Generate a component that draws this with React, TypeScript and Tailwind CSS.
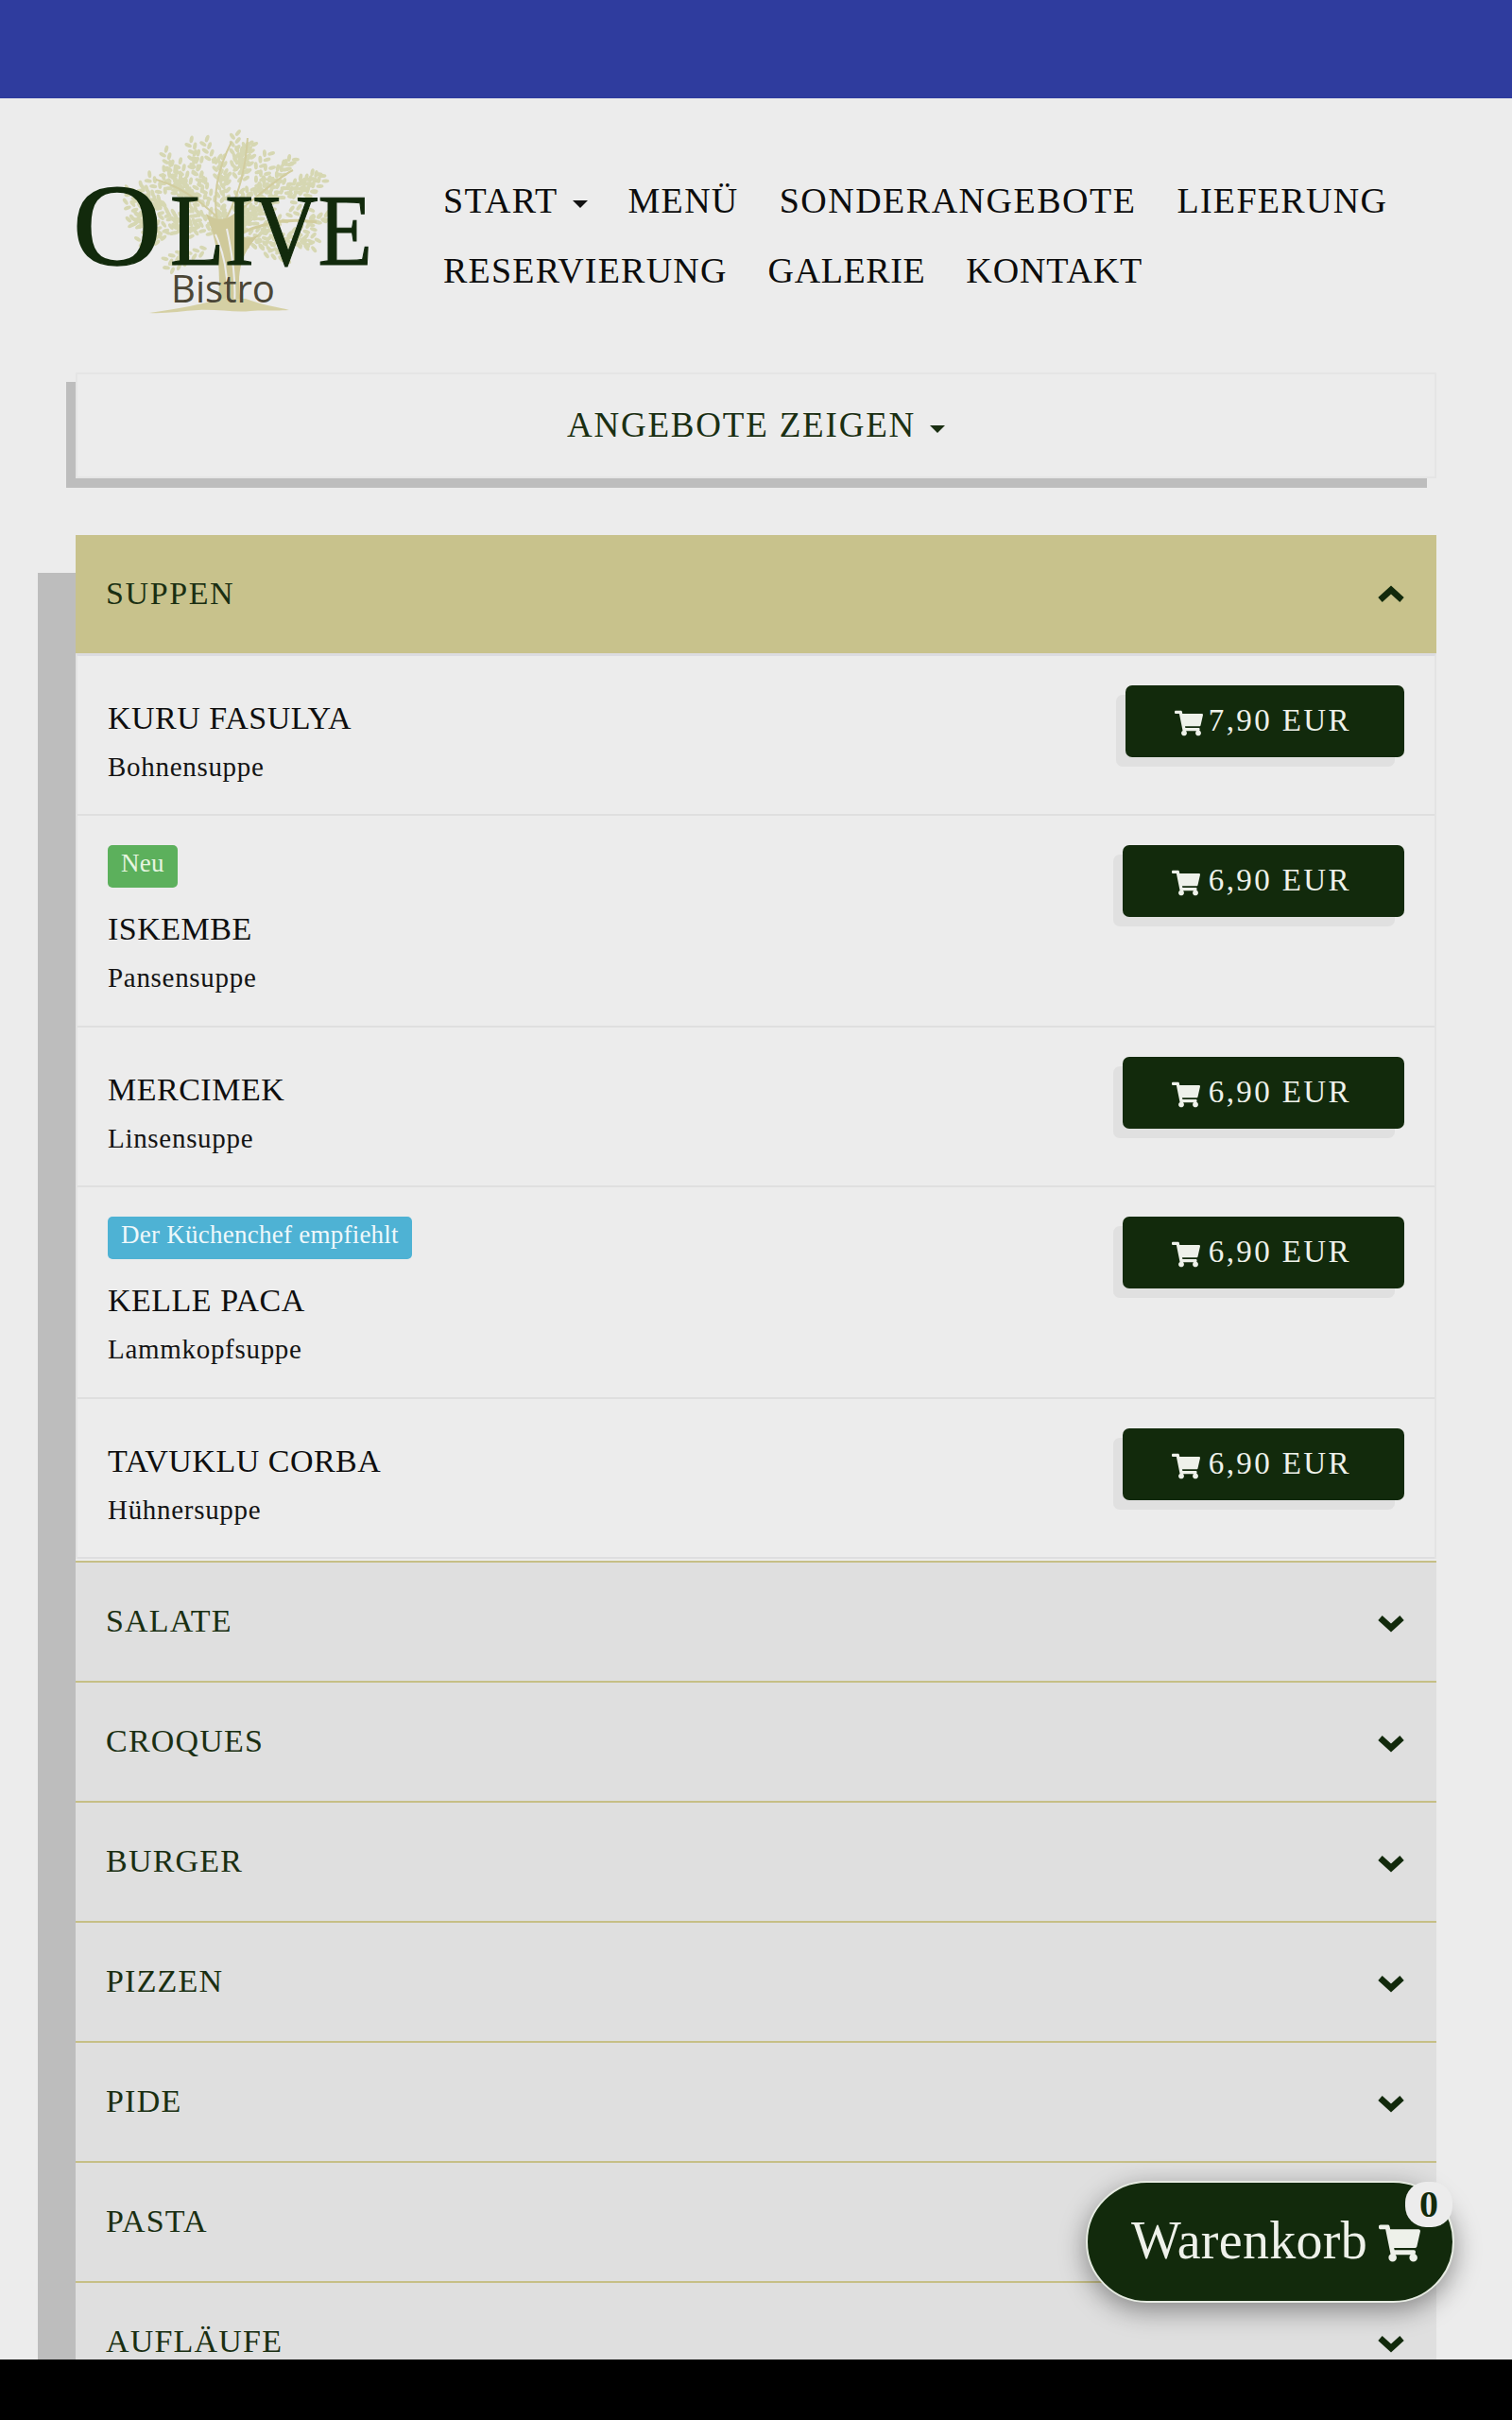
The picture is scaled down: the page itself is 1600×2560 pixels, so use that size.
import React from "react";
import { FaShoppingCart } from "react-icons/fa";

const serif = "font-['Liberation_Serif','Noto_Serif',serif]";

type Item = { title: string; desc: string; price: string; narrow?: boolean; badge?: { text: string; cls: string } };

const items: Item[] = [
  { title: "KURU FASULYA", desc: "Bohnensuppe", price: "7,90 EUR", narrow: true },
  { title: "ISKEMBE", desc: "Pansensuppe", price: "6,90 EUR", badge: { text: "Neu", cls: "bg-[#5cb05c] text-[#e6f5e0]" } },
  { title: "MERCIMEK", desc: "Linsensuppe", price: "6,90 EUR" },
  { title: "KELLE PACA", desc: "Lammkopfsuppe", price: "6,90 EUR", badge: { text: "Der Küchenchef empfiehlt", cls: "bg-[#4eb2d4] text-[#eef8fb]" } },
  { title: "TAVUKLU CORBA", desc: "Hühnersuppe", price: "6,90 EUR" },
];

const categories = ["SALATE", "CROQUES", "BURGER", "PIZZEN", "PIDE", "PASTA", "AUFLÄUFE"];

// Deterministic leaves for the olive tree of the logo
function buildLeaves() {
  let s = 12345;
  const r = () => {
    s = (s * 16807) % 2147483647;
    return s / 2147483647;
  };
  const out: { x: number; y: number; a: number }[] = [];
  for (let i = 0; i < 100; i++) {
    const t = r() * Math.PI * 2;
    const d = Math.sqrt(r());
    const cx = 160 + Math.cos(t) * d * 92;
    let cy = 94 + Math.sin(t) * d * 60;
    if (cy > 135 && Math.abs(cx - 158) < 35) cy -= 30;
    const ang = Math.atan2(cy - 125, cx - 158) + (r() - 0.5) * 0.5;
    for (let j = 0; j < 7; j++) {
      const px = cx + Math.cos(ang) * j * 4;
      const py = cy + Math.sin(ang) * j * 4;
      const side = j % 2 === 0 ? 1 : -1;
      const deg = (ang * 180) / Math.PI + side * 38;
      out.push({ x: px + Math.cos(ang + side * 1.4) * 3, y: py + Math.sin(ang + side * 1.4) * 3, a: deg });
    }
  }
  return out;
}
const leaves = buildLeaves();

function Logo() {
  return (
    <svg width="320" height="206" viewBox="0 0 320 206" className="block shrink-0 mt-[26px] overflow-visible">
      <g fill="#d6d7b2">
        {leaves.map((l, i) => (
          <ellipse key={i} cx={l.x} cy={l.y} rx="4" ry="2" transform={`rotate(${l.a} ${l.x} ${l.y})`} />
        ))}
      </g>
      <g stroke="#d2cd9f" fill="none" strokeWidth="2">
        <path d="M150 105 C145 75 150 50 165 20" />
        <path d="M150 100 C130 80 105 65 85 60" />
        <path d="M158 105 C185 85 210 60 230 50" />
        <path d="M160 100 C175 70 180 45 182 16" />
        <path d="M165 122 C195 105 225 100 255 105" strokeWidth="3" />
      </g>
      <path d="M138 96 C150 105 160 104 176 90 C170 115 172 128 195 118 C176 135 168 160 176 192 L150 192 C155 160 150 125 138 96 Z" fill="#cfc99a" />
      <g stroke="#ececec" strokeWidth="2" fill="none">
        <path d="M148 118 C158 140 162 165 160 192" />
        <path d="M160 112 C165 135 170 165 168 192" />
      </g>
      <path d="M78 201 C110 196 135 192 152 186 L180 186 C195 192 215 195 226 198 C205 199 195 198 185 199 C170 201 150 197 130 198 C112 199 95 202 78 201 Z" fill="#d5d0a4" />
      <text x="-3" y="150" textLength="94" lengthAdjust="spacingAndGlyphs" fontSize="122" fontFamily="'Liberation Serif',serif" fill="#122a0c" stroke="#122a0c" strokeWidth="1.6">O</text>
      <text x="100" y="150" textLength="214" lengthAdjust="spacingAndGlyphs" fontSize="108" fontFamily="'Liberation Serif',serif" fill="#122a0c" stroke="#122a0c" strokeWidth="1.2">LIVE</text>
      <text x="101" y="190" textLength="110" lengthAdjust="spacingAndGlyphs" fontSize="40" fontFamily="'Open Sans',sans-serif" fill="#4b4636">Bistro</text>
    </svg>
  );
}

function Chevron({ up }: { up?: boolean }) {
  return (
    <svg width="30" height="20" viewBox="0 0 30 20" className={`shrink-0 ${up ? "rotate-180" : "mt-[2px]"}`}>
      <path d="M3.5 4.5 L15 15 L26.5 4.5" fill="none" stroke="#122a0c" strokeWidth="6.5" strokeLinejoin="miter" />
    </svg>
  );
}

function Caret({ color }: { color: string }) {
  return <span className={`inline-block w-0 h-0 ml-[15px] align-middle border-x-[8px] border-x-transparent border-t-[8px] ${color}`} />;
}

function NavLink({ children, ls }: { children: React.ReactNode; ls: string }) {
  return <a className={`whitespace-nowrap text-[38px] leading-[74px] text-[#0c0c0c] ${ls}`}>{children}</a>;
}

function Row({ item, last }: { item: Item; last: boolean }) {
  return (
    <div className={`flex justify-between items-start pt-[31px] pl-[32px] pr-[32px] border-b-2 ${last ? "border-b-[#dedee0]" : "border-b-[#dfdfdf]"}`}>
      <div className={item.badge ? "pb-[26px]" : "pb-[25px] pt-[10px]"}>
        {item.badge && (
          <div className={`inline-block h-[45px] px-[14px] rounded-[5px] text-[27px] leading-[39px] tracking-[0.25px] ${item.badge.cls}`}>{item.badge.text}</div>
        )}
        <div className={`text-[34px] leading-[50px] tracking-[0.5px] text-[#0e0e0e] ${item.badge ? "mt-[19px]" : ""}`}>{item.title}</div>
        <div className="mt-[1px] text-[29px] leading-[50px] text-[#141414] tracking-[0.7px]">{item.desc}</div>
      </div>
      <button className={`h-[76px] pr-[56px] rounded-[7px] bg-[#122a0c] text-[#eef1ea] flex items-center text-[33px] tracking-[2.4px] shadow-[-10px_10px_0_#e0e0e0] ${item.narrow ? "pl-[52px] gap-[6px]" : "pl-[52px] gap-[9px]"}`}>
        <FaShoppingCart className="text-[30px] mt-[3px]" />
        <span>{item.price}</span>
      </button>
    </div>
  );
}

function Category({ name }: { name: string }) {
  return (
    <div className="h-[127px] flex items-center justify-between bg-[#dfdfdf] border-t-2 border-t-[#c6bf86] pl-[32px] pr-[33px]">
      <span className="text-[34px] tracking-[1.2px] text-[#1a2f12] mb-[3px]">{name}</span>
      <Chevron />
    </div>
  );
}

export default function App() {
  return (
    <div className={`w-[1600px] h-[2560px] bg-black overflow-hidden ${serif}`}>
      <div className="relative h-[2496px] bg-[#ececec] overflow-hidden">
        <div className="h-[104px] bg-[#2f3c9e]" />
        <header className="h-[290px] pl-[80px] flex">
          <Logo />
          <nav className="ml-[69px] mt-[71px] w-[1040px] flex flex-wrap gap-x-[43px] content-start">
            <NavLink ls="tracking-[1.3px]">START<Caret color="border-t-[#111111]" /></NavLink>
            <NavLink ls="tracking-[1.3px]">MENÜ</NavLink>
            <NavLink ls="tracking-[1.5px]">SONDERANGEBOTE</NavLink>
            <NavLink ls="tracking-[1.3px]">LIEFERUNG</NavLink>
            <NavLink ls="tracking-[1.2px]">RESERVIERUNG</NavLink>
            <NavLink ls="tracking-[0.6px]">GALERIE</NavLink>
            <NavLink ls="tracking-[0.9px]">KONTAKT</NavLink>
          </nav>
        </header>

        <div className="mx-[80px]">
          <div className="h-[112px] border-2 border-[#e5e5e5] bg-[#ececec] flex items-center justify-center text-[37px] tracking-[1.8px] text-[#1a2f12] shadow-[-10px_10px_0_#bdbdbd]">
            <span>ANGEBOTE ZEIGEN<Caret color="border-t-[#1a2f12]" /></span>
          </div>

          <div className="mt-[60px] shadow-[-40px_40px_0_#bdbdbd]">
            <div className="h-[125px] bg-[#c8c28c] flex items-center justify-between pl-[32px] pr-[33px]">
              <span className="text-[34px] tracking-[1.6px] text-[#1a2f12] mb-[2px]">SUPPEN</span>
              <Chevron up />
            </div>
            <div className="border-t-[3px] border-t-[#dcdce0] bg-[#ececec] border-x-2 border-x-[#e3e3e3]">
              {items.map((it, i) => (
                <Row key={it.title} item={it} last={i === items.length - 1} />
              ))}
            </div>
            <div className="h-[2px] bg-[#ececec]" />
            {categories.map((c) => (
              <Category key={c} name={c} />
            ))}
          </div>
        </div>

        <div className="absolute left-[1149px] top-[2307px] w-[390px] h-[129px] rounded-full bg-[#122a0c] border-2 border-[#e6ebe2] shadow-[0_8px_28px_rgba(0,0,0,0.4)] flex items-center pl-[46px] pb-[4px] text-[#eef1ea] text-[56px] leading-none">
          <span className="tracking-[0.3px]">Warenkorb</span>
          <FaShoppingCart className="text-[44px] ml-[12px] mt-[6px]" />
          <span className="absolute right-[0px] top-[-1px] w-[50px] h-[48px] rounded-[22px] bg-[#ececec] text-[#122a0c] text-[40px] font-bold flex items-center justify-center">0</span>
        </div>
      </div>
    </div>
  );
}
